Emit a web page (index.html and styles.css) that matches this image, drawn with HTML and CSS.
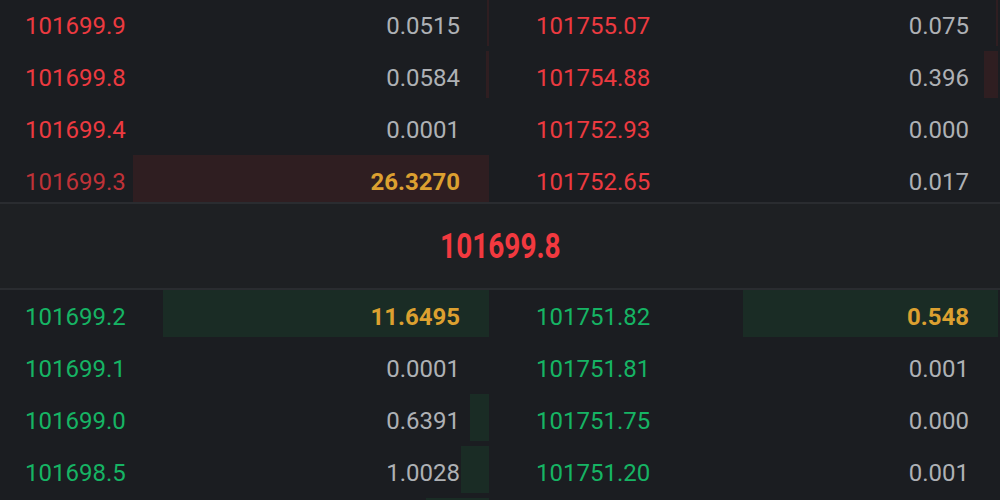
FILE: index.html
```html
<!DOCTYPE html>
<html>
<head>
<meta charset="utf-8">
<link rel="stylesheet" href="styles.css">
</head>
<body>
<div class="book">
  <div class="side asks">
    <div class="row"><div class="bar" style="width:2px"></div><span class="price">101699.9</span><span class="qty">0.0515</span></div>
    <div class="row"><div class="bar" style="width:2px"></div><span class="price">101755.07</span><span class="qty">0.075</span></div>
    <div class="row"><div class="bar" style="width:3px"></div><span class="price">101699.8</span><span class="qty">0.0584</span></div>
    <div class="row"><div class="bar" style="width:14px"></div><span class="price">101754.88</span><span class="qty">0.396</span></div>
    <div class="row"><span class="price">101699.4</span><span class="qty">0.0001</span></div>
    <div class="row"><span class="price">101752.93</span><span class="qty">0.000</span></div>
    <div class="row"><div class="bar" style="width:356px"></div><span class="price dim">101699.3</span><span class="qty big">26.3270</span></div>
    <div class="row"><span class="price">101752.65</span><span class="qty">0.017</span></div>
  </div>
  <div class="spread"><span class="last">101699.8</span></div>
  <div class="side bids">
    <div class="row"><div class="bar" style="width:326px"></div><span class="price">101699.2</span><span class="qty big">11.6495</span></div>
    <div class="row"><div class="bar" style="width:255px"></div><span class="price">101751.82</span><span class="qty big">0.548</span></div>
    <div class="row"><span class="price">101699.1</span><span class="qty">0.0001</span></div>
    <div class="row"><span class="price">101751.81</span><span class="qty">0.001</span></div>
    <div class="row"><div class="bar" style="width:19px"></div><span class="price">101699.0</span><span class="qty">0.6391</span></div>
    <div class="row"><span class="price">101751.75</span><span class="qty">0.000</span></div>
    <div class="row"><div class="bar" style="width:28px"></div><span class="price">101698.5</span><span class="qty">1.0028</span></div>
    <div class="row"><span class="price">101751.20</span><span class="qty">0.001</span></div>
    <div class="row"><div class="bar" style="width:63px"></div></div>
    <div class="row"></div>
  </div>
</div>
</body>
</html>
```
FILE: styles.css
```css
html, body {
  margin: 0;
  padding: 0;
  background: #1b1d21;
  overflow: hidden;
}
body {
  width: 1000px;
  height: 500px;
  font-family: Roboto, "Liberation Sans", sans-serif;
}
.book {
  display: flex;
  flex-direction: column;
}
.side {
  display: grid;
  grid-template-columns: 489px 487px;
  column-gap: 22px;
  row-gap: 5px;
}
.asks {
  margin-top: -1px;
}
.row {
  position: relative;
  height: 47px;
  display: flex;
  align-items: center;
  justify-content: space-between;
  padding: 0 29px 0 25px;
  font-size: 24px;
  line-height: 1;
}
.bar {
  position: absolute;
  top: 0;
  right: 0;
  bottom: 0;
}
.asks .bar { background: #2f1e21; }
.bids .bar { background: #1a2c25; }
.price, .qty {
  position: relative;
  margin-top: 6px;
}
.asks .price { color: #ec3a40; }
.asks .price.dim { color: #bf3238; }
.bids .price { color: #16b464; }
.qty { color: #aeb1b5; }
.qty.big { color: #dca030; font-weight: 700; }
.spread {
  height: 84px;
  border-top: 2px solid #2a2c30;
  border-bottom: 2px solid #2a2c30;
  background: #1e2023;
  display: flex;
  align-items: center;
  justify-content: center;
}
.last {
  display: inline-block;
  color: #f2393f;
  font-weight: 700;
  font-size: 35px;
  line-height: 1;
  transform: scaleX(0.8);
  margin-top: 0;
}
```
